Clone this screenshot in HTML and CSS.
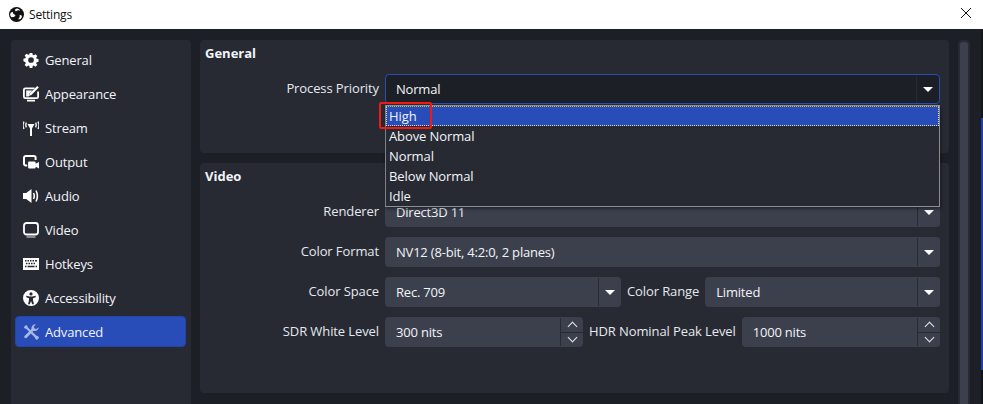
FILE: index.html
```html
<!DOCTYPE html>
<html lang="en">
<head>
<meta charset="utf-8">
<title>Settings</title>
<link rel="stylesheet" href="styles.css">
</head>
<body>
<div class="window">
  <header class="titlebar">
    <svg class="logo" viewBox="0 0 16 16"><circle cx="8" cy="8" r="8" fill="#111"/><path d="M6.500 2.600a3.300 3.300 0 0 1 5.400 1.400 4 4 0 0 0-4.600.9 3 3 0 0 1-.8-2.300zM13.700 9.200a3.300 3.300 0 0 1-4 3.800 4 4 0 0 0 1.500-4.500 3 3 0 0 1 2.500.7zM2.700 11a3.300 3.300 0 0 1 1.200-6 4 4 0 0 0 3 3.600 3 3 0 0 1-1.700 2.100z" fill="#fff"/></svg>
    <span class="title-text">Settings</span>
    <svg class="close" viewBox="0 0 10 10"><path d="M0 0L10 10M10 0L0 10" stroke="#111" stroke-width="1" fill="none"/></svg>
  </header>
  <div class="content">
    <nav class="sidebar">
      <div class="nav-item"><svg class="ico" viewBox="-1 -1 18 18"><path fill="#fff" fill-rule="evenodd" d="M6.500 0h3l.4 2.200 1.200.5 1.900-1.300 2.100 2.100-1.300 1.900.5 1.200 2.200.4v3l-2.200.4-.5 1.200 1.300 1.900-2.100 2.100-1.900-1.300-1.200.5-.4 2.200h-3l-.4-2.200-1.200-.5-1.900 1.300-2.100-2.100 1.300-1.900-.5-1.200L-.5 9.500v-3l2.200-.4.5-1.200L.9 3l2.100-2.100 1.900 1.300 1.200-.5zM8 4.800a3.200 3.200 0 1 0 0 6.400 3.200 3.200 0 0 0 0-6.400z"/></svg><span>General</span></div>
      <div class="nav-item"><svg class="ico" viewBox="0 0 16 16"><path fill="none" stroke="#fff" stroke-width="1.800" d="M11.500 2.400H2.300A1.400 1.400 0 0 0 .9 3.800v7a1.400 1.400 0 0 0 1.400 1.400h11.400a1.400 1.400 0 0 0 1.400-1.400V5.500"/><path fill="#fff" d="M4 13.800h8v1.700H4zM3.200 4.600h6.300l-3 3-.8 2.800h-2.500z"/><path fill="#fff" d="M14.200 0l1.600 1.600L8.300 9.100l-2.400.8.800-2.400z"/></svg><span>Appearance</span></div>
      <div class="nav-item"><svg class="ico" viewBox="0 0 16 16"><path fill="#fff" d="M4.500 4h7L9 8.500V16H7V8.500z"/><path fill="none" stroke="#f0f1f4" stroke-width="1.400" d="M3.400 2.600q-1.200 2.400 0 4.800M1 1.600q-2 3.800 0 7.400M12.600 2.600q1.200 2.400 0 4.800M15 1.600q2 3.800 0 7.400"/></svg><span>Stream</span></div>
      <div class="nav-item"><svg class="ico" viewBox="0 0 16 16"><path fill="none" stroke="#fff" stroke-width="2" d="M4.200 11.500H2.800A1.800 1.800 0 0 1 1 9.700V3.800A1.800 1.800 0 0 1 2.800 2h8a1.800 1.800 0 0 1 1.800 1.800V6"/><path fill="#fff" d="M6 7.500h5.500a1.200 1.200 0 0 1 1.200 1.200V9.800L16 8v6.500L12.700 12.700v.6a1.200 1.200 0 0 1-1.200 1.200H6.300a1.200 1.200 0 0 1-1.200-1.200V8.500a1 1 0 0 1 .9-1z"/></svg><span>Output</span></div>
      <div class="nav-item"><svg class="ico" viewBox="0 0 16 16"><path fill="#fff" d="M0 5h3.200L8.500 1v14l-5.300-4H0z"/><path fill="none" stroke="#fff" stroke-width="1.600" d="M10.500 5q1.500 3 0 6M13 2.500q2.800 5.500 0 11"/></svg><span>Audio</span></div>
      <div class="nav-item"><svg class="ico" viewBox="0 0 16 16"><rect x="1" y="1" width="14" height="11.500" rx="2.500" fill="none" stroke="#fff" stroke-width="1.800"/><path fill="#e4e6ea" d="M3.500 14.500h9v1h-9z"/></svg><span>Video</span></div>
      <div class="nav-item"><svg class="ico" viewBox="0 0 16 16"><path fill="#fff" fill-rule="evenodd" d="M0 2h16v12H0zM2 4v1.500h1.500V4zM4.500 4v1.500H6V4zM7 4v1.500h1.500V4zM9.500 4v1.500H11V4zM12 4v1.500h2V4zM3 6.700v1.500h1.500V6.700zM5.500 6.700v1.500H7V6.700zM8 6.700v1.500h1.500V6.700zM10.500 6.700v1.500H12V6.700zM2 9.700v1.500h1.500V9.700zM4.500 9.700v1.500h7V9.700zM12.500 9.700v1.500H14V9.700z"/></svg><span>Hotkeys</span></div>
      <div class="nav-item"><svg class="ico" viewBox="0 0 16 16"><path fill="#fff" fill-rule="evenodd" d="M8 0a8 8 0 1 1 0 16A8 8 0 0 1 8 0zM8 2.300a1.600 1.600 0 1 0 0 3.200 1.600 1.600 0 0 0 0-3.200zM3.300 5.800v1.500L6 8.200v2L5 14.300h1.800L8 11l1.200 3.300H11L10 10.200v-2l2.700-.9V5.800L9.300 6.500H6.700z"/></svg><span>Accessibility</span></div>
      <div class="nav-item active"><svg class="ico" viewBox="0 0 16 16"><path fill="#a9b8e6" d="M.8 3.200L3 1l1.400.9.5 1.500 8.600 8.400 1.600.5.900 1.500-2.100 2.100-1.500-.9-.5-1.600L3.500 4.900l-1.600-.5z"/><path fill="#a9b8e6" d="M15.800 3.200a4 4 0 0 1-5.300 3.600L3.600 14a1.500 1.500 0 0 1-2.100-2.100l7-7A4 4 0 0 1 13 .2l-2.200 2.200.6 2 2 .6z"/></svg><span>Advanced</span></div>
    </nav>
    <main class="main">
      <section class="panel panel-general">
        <h2 class="panel-title">General</h2>
        <div class="form-row">
          <label class="form-label">Process Priority</label>
          <div class="dropdown-wrap">
            <div class="combo combo-open"><span class="combo-value">Normal</span><span class="combo-btn"><i class="caret"></i></span></div>
            <ul class="popup">
              <li class="opt opt-current">High</li>
              <li class="opt">Above Normal</li>
              <li class="opt">Normal</li>
              <li class="opt">Below Normal</li>
              <li class="opt">Idle</li>
            </ul>
            <div class="highlight"></div>
          </div>
        </div>
      </section>
      <section class="panel panel-video">
        <h2 class="panel-title">Video</h2>
        <div class="form-row">
          <label class="form-label">Renderer</label>
          <div class="combo"><span class="combo-value">Direct3D 11</span><span class="combo-btn"><i class="caret"></i></span></div>
        </div>
        <div class="form-row">
          <label class="form-label">Color Format</label>
          <div class="combo"><span class="combo-value">NV12 (8-bit, 4:2:0, 2 planes)</span><span class="combo-btn"><i class="caret"></i></span></div>
        </div>
        <div class="form-row">
          <label class="form-label">Color Space</label>
          <div class="pair">
            <div class="combo"><span class="combo-value">Rec. 709</span><span class="combo-btn"><i class="caret"></i></span></div>
            <label class="pair-label">Color Range</label>
            <div class="combo"><span class="combo-value">Limited</span><span class="combo-btn"><i class="caret"></i></span></div>
          </div>
        </div>
        <div class="form-row">
          <label class="form-label">SDR White Level</label>
          <div class="pair">
            <div class="combo spin"><span class="combo-value">300 nits</span><span class="spin-btns"><span class="spin-up"><i class="chev chev-up"></i></span><span class="spin-down"><i class="chev chev-down"></i></span></span></div>
            <label class="pair-label">HDR Nominal Peak Level</label>
            <div class="combo spin"><span class="combo-value">1000 nits</span><span class="spin-btns"><span class="spin-up"><i class="chev chev-up"></i></span><span class="spin-down"><i class="chev chev-down"></i></span></span></div>
          </div>
        </div>
      </section>
    </main>
    <div class="scrollbar"><div class="scroll-thumb"></div></div>
  </div>
</div>
</body>
</html>
```
FILE: styles.css
```css
* { box-sizing: border-box; }
html, body { margin: 0; padding: 0; }
body {
  width: 983px;
  height: 404px;
  overflow: hidden;
  background: linear-gradient(to bottom, #fff 29px, #14161c 29px, #14161c 118px, #1f3fa8 118px, #1f3fa8 370px, #11131a 370px);
  font-family: "Open Sans", "Noto Sans", sans-serif;
  font-size: 13px;
  color: #fff;
}
.window { width: 981px; height: 404px; display: flex; flex-direction: column; }
.titlebar {
  height: 29px;
  flex: none;
  background: #fff;
  color: #111;
  display: flex;
  align-items: center;
  padding: 0 10px 3px 9px;
  font-size: 12px;
  letter-spacing: -0.2px;
}
.logo { width: 15px; height: 15px; margin-right: 5px; margin-top: 2px; }
.title-text { flex: 1; margin-top: 2px; }
.close { width: 10px; height: 10px; }
.content {
  flex: 1;
  min-height: 0;
  background: #1d1f26;
  display: flex;
  padding: 11px 0 0 11px;
}
.sidebar {
  width: 180px;
  flex: none;
  background: #272a33;
  border-radius: 4px 4px 0 0;
  padding: 4px 5px 0 4px;
  display: flex;
  flex-direction: column;
  gap: 3px;
}
.nav-item {
  height: 31px;
  display: flex;
  align-items: center;
  padding-left: 8px;
  border-radius: 4px;
  color: #f2f4f8;
  letter-spacing: -0.15px;
}
.nav-item span { margin-left: 6px; }
.nav-item.active { background: #284cb8; border: 1px solid #2345a6; padding-left: 7px; }
.ico { width: 16px; height: 16px; flex: none; }
.main {
  width: 749px;
  flex: none;
  margin-left: 9px;
  display: flex;
  flex-direction: column;
  gap: 10px;
}
.panel { background: #272a33; border-radius: 4px; padding: 4px 9px 0 5px; }
.panel-general { height: 113px; }
.panel-video { height: 230px; }
.panel-title { margin: 0; height: 20px; line-height: 19px; font-size: 13px; font-weight: 700; color: #f2f4f8; }
.form-row { display: flex; align-items: center; height: 30px; margin-top: 10px; }
.form-label { width: 174px; flex: none; text-align: right; color: #e6e8ee; margin-top: -2px; letter-spacing: -0.1px; }
.dropdown-wrap { flex: 1; margin-left: 6px; position: relative; }
.combo {
  flex: 1;
  min-width: 0;
  margin-left: 6px;
  height: 30px;
  background: #3c404d;
  border-radius: 4px;
  display: flex;
  align-items: center;
  color: #f2f4f8;
}
.dropdown-wrap .combo { margin-left: 0; }
.combo-open { background: #1d1f26; border: 1px solid #284cb8; }
.combo-value { flex: 1; padding-left: 11px; white-space: nowrap; letter-spacing: -0.2px; }
.combo-open .combo-value { padding-left: 10px; }
.combo-btn {
  width: 23px;
  height: 28px;
  border-left: 1px solid #272a33;
  display: flex;
  align-items: center;
  justify-content: center;
}
.caret {
  display: block;
  width: 0;
  height: 0;
  border-left: 5px solid transparent;
  border-right: 5px solid transparent;
  border-top: 5px solid #fff;
}
.pair { flex: 1; display: flex; align-items: center; margin-left: 6px; }
.pair .combo { flex: none; margin-left: 0; width: 236px; }
.pair .combo:last-child { flex: 1; width: auto; }
.pair-label { margin: -2px 6px 0; white-space: nowrap; color: #e6e8ee; letter-spacing: -0.1px; }
.pair .spin { width: 198px; }
.spin-btns { width: 23px; height: 28px; border-left: 1px solid #272a33; display: flex; flex-direction: column; }
.spin-up, .spin-down { flex: 1; display: flex; align-items: center; justify-content: center; }
.spin-up { border-bottom: 1px solid #272a33; }
.chev { display: block; width: 7px; height: 7px; border-left: 1.2px solid #e6e8ee; border-top: 1.2px solid #e6e8ee; }
.chev-up { transform: rotate(45deg); margin-top: 4px; }
.chev-down { transform: rotate(225deg); margin-bottom: 4px; }
.popup {
  position: absolute;
  left: 0;
  right: 0;
  top: 31px;
  margin: 0;
  padding: 0;
  list-style: none;
  height: 102px;
  background: #272a33;
  border: 1px solid #8c8e94;
  border-left-color: #7f8187;
  box-shadow: 1px 2px 3px rgba(0,0,0,.4);
}
.opt { height: 20px; line-height: 21px; padding-left: 3px; color: #f2f4f8; letter-spacing: -0.1px; }
.opt-current { background: #284cb8; border: 1px dotted #d8d8d8; border-top-color: #e0b030; line-height: 18px; padding-left: 2px; }
.highlight {
  position: absolute;
  left: -6px;
  top: 28px;
  width: 53px;
  height: 27px;
  border: 2.5px solid #f01a14;
  border-radius: 2px;
}
.scrollbar {
  width: 12px;
  flex: none;
  margin-left: 9px;
  background: #272a33;
  border-radius: 4px 4px 0 0;
  padding: 2px 2px 0;
}
.scroll-thumb { height: 100%; width: 8px; background: #3c404d; border-radius: 3px 3px 0 0; }
```
